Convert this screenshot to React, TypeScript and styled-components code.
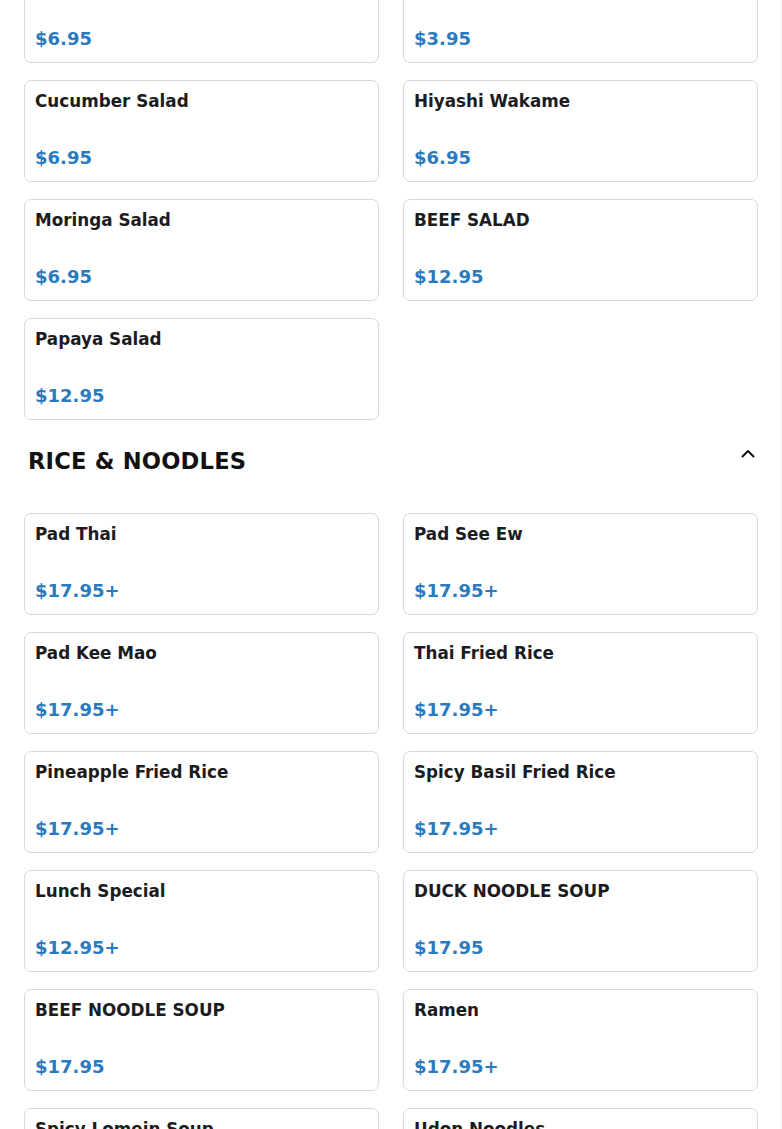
import React from "react";
import styled, { createGlobalStyle } from "styled-components";

const Global = createGlobalStyle`
  html, body { margin: 0; padding: 0; background: #ffffff; }
  body { font-family: "DejaVu Sans", Verdana, sans-serif; color: #1c1c1e; }
  * { box-sizing: border-box; }
`;

const Page = styled.div`
  padding: 0 24px;
  margin-top: -39px;
  width: 782px;
  box-shadow: inset -2px 0 0 #f7f7f7;
`;

const Grid = styled.div`
  display: grid;
  grid-template-columns: 1fr 1fr;
  column-gap: 24px;
  row-gap: 17px;
`;

const Card = styled.div`
  height: 102px;
  border: 1px solid #d9d9d9;
  border-radius: 7px;
  padding: 8px 10px 11px;
  display: flex;
  flex-direction: column;
  justify-content: space-between;
  background: #fff;
`;

const Title = styled.div`
  font-size: 16.8px;
  font-weight: 700;
  line-height: 24px;
  color: #1c1c1e;
`;

const Price = styled.div`
  font-size: 18px;
  font-weight: 700;
  line-height: 24px;
  color: #2a7ac0;
`;

const SectionHeader = styled.div`
  display: flex;
  justify-content: space-between;
  align-items: flex-start;
  padding: 0 3px 0 4px;
  margin: 27px 0 38px;
`;

const Heading = styled.h2`
  margin: 0;
  font-size: 22.6px;
  line-height: 28px;
  font-weight: 700;
  color: #111;
  letter-spacing: 0.2px;
`;

const Toggle = styled.button`
  border: none;
  background: none;
  padding: 0;
  margin-top: -1px;
  width: 14px;
  height: 16px;
  display: flex;
  align-items: center;
  justify-content: center;
  cursor: pointer;
`;

type Item = { name: string; price: string };

const salads: Item[] = [
  { name: "Seaweed Salad", price: "$6.95" },
  { name: "Miso Soup", price: "$3.95" },
  { name: "Cucumber Salad", price: "$6.95" },
  { name: "Hiyashi Wakame", price: "$6.95" },
  { name: "Moringa Salad", price: "$6.95" },
  { name: "BEEF SALAD", price: "$12.95" },
  { name: "Papaya Salad", price: "$12.95" },
];

const noodles: Item[] = [
  { name: "Pad Thai", price: "$17.95+" },
  { name: "Pad See Ew", price: "$17.95+" },
  { name: "Pad Kee Mao", price: "$17.95+" },
  { name: "Thai Fried Rice", price: "$17.95+" },
  { name: "Pineapple Fried Rice", price: "$17.95+" },
  { name: "Spicy Basil Fried Rice", price: "$17.95+" },
  { name: "Lunch Special", price: "$12.95+" },
  { name: "DUCK NOODLE SOUP", price: "$17.95" },
  { name: "BEEF NOODLE SOUP", price: "$17.95" },
  { name: "Ramen", price: "$17.95+" },
  { name: "Spicy Lomein Soup", price: "$17.95" },
  { name: "Udon Noodles", price: "$17.95+" },
];

const MenuGrid = ({ items }: { items: Item[] }) => (
  <Grid>
    {items.map((it) => (
      <Card key={it.name}>
        <Title>{it.name}</Title>
        <Price>{it.price}</Price>
      </Card>
    ))}
  </Grid>
);

export default function App() {
  return (
    <>
      <Global />
      <Page>
        <MenuGrid items={salads} />
        <SectionHeader>
          <Heading>RICE &amp; NOODLES</Heading>
          <Toggle aria-label="collapse">
            <svg width="14" height="14" viewBox="0 0 14 14" fill="none">
              <path d="M1.5 9.5 L7 4 L12.5 9.5" stroke="#111" strokeWidth="2" strokeLinecap="round" strokeLinejoin="round" />
            </svg>
          </Toggle>
        </SectionHeader>
        <MenuGrid items={noodles} />
      </Page>
    </>
  );
}
